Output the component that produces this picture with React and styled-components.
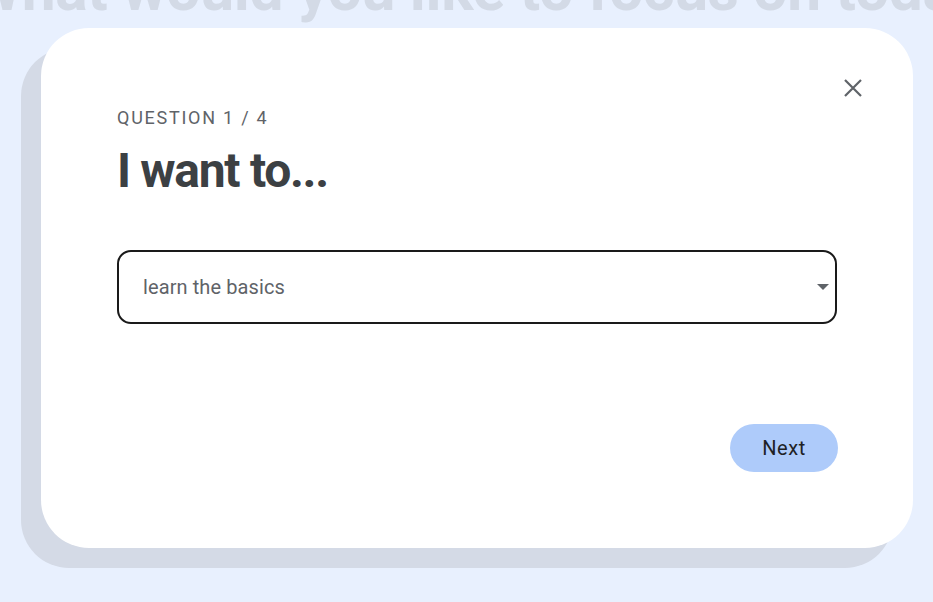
import React from "react";
import styled, { createGlobalStyle } from "styled-components";

const GlobalStyle = createGlobalStyle`
  html, body {
    margin: 0;
    padding: 0;
    background: #e8f0fe;
  }
  body {
    font-family: Roboto, "Noto Sans", Arial, sans-serif;
    overflow: hidden;
  }
`;

const Page = styled.div`
  width: 933px;
  height: 602px;
  display: flex;
  flex-direction: column;
  overflow: hidden;
  background: #e8f0fe;
`;

const BackTitle = styled.h1`
  margin: -40px 0 0 -31px;
  width: 1013px;
  font-size: 60.5px;
  line-height: 60px;
  font-weight: 700;
  color: #d3dae6;
  text-align: center;
  white-space: nowrap;
  letter-spacing: -0.3px;
`;

const Stage = styled.div`
  padding: 8px 20px 0 41px;
`;

const Card = styled.section`
  position: relative;
  box-sizing: border-box;
  width: 872px;
  height: 520px;
  background: #ffffff;
  border-radius: 48px;
  box-shadow: -20px 20px 0 0 #d4dae6;
  padding: 78px 76px 76px;
  display: flex;
  flex-direction: column;
`;

const CloseButton = styled.button`
  position: absolute;
  top: 42px;
  right: 42px;
  width: 36px;
  height: 36px;
  padding: 0;
  border: none;
  background: transparent;
  display: flex;
  align-items: center;
  justify-content: center;
  cursor: pointer;
`;

const Label = styled.div`
  font-size: 18px;
  line-height: 24px;
  color: #5f6368;
  letter-spacing: 1.75px;
`;

const Title = styled.h2`
  margin: 13px 0 0;
  font-size: 48px;
  line-height: 56px;
  font-weight: 700;
  color: #3c4043;
  letter-spacing: -1.3px;
`;

const SelectBox = styled.div`
  box-sizing: border-box;
  margin-top: 51px;
  height: 74px;
  border: 2px solid #1a1a1a;
  border-radius: 14px;
  display: flex;
  align-items: center;
  justify-content: space-between;
  padding: 0 6px 0 24px;
  cursor: pointer;
`;

const SelectText = styled.span`
  font-size: 20px;
  color: #5f6368;
  letter-spacing: 0.1px;
`;

const Caret = styled.span`
  width: 0;
  height: 0;
  border-left: 6px solid transparent;
  border-right: 6px solid transparent;
  border-top: 6px solid #5f6368;
`;

const Footer = styled.div`
  margin-top: auto;
  display: flex;
  justify-content: flex-end;
`;

const NextButton = styled.button`
  width: 108px;
  height: 48px;
  margin-right: -1px;
  border: none;
  border-radius: 24px;
  background: #aecbfa;
  color: #202124;
  font-family: Roboto, "Noto Sans", Arial, sans-serif;
  font-size: 20px;
  font-weight: 400;
  letter-spacing: 0.6px;
  cursor: pointer;
`;

function CloseIcon() {
  return (
    <svg width="20" height="20" viewBox="0 0 20 20" aria-hidden="true">
      <path
        d="M2 2 L18 18 M18 2 L2 18"
        stroke="#5f6368"
        strokeWidth="2.2"
        fill="none"
      />
    </svg>
  );
}

export default function App() {
  return (
    <>
      <GlobalStyle />
      <Page>
        <BackTitle>What would you like to focus on today?</BackTitle>
        <Stage>
          <Card>
            <CloseButton aria-label="Close">
              <CloseIcon />
            </CloseButton>
            <Label>QUESTION 1 / 4</Label>
            <Title>I want to...</Title>
            <SelectBox role="combobox">
              <SelectText>learn the basics</SelectText>
              <Caret />
            </SelectBox>
            <Footer>
              <NextButton>Next</NextButton>
            </Footer>
          </Card>
        </Stage>
      </Page>
    </>
  );
}
